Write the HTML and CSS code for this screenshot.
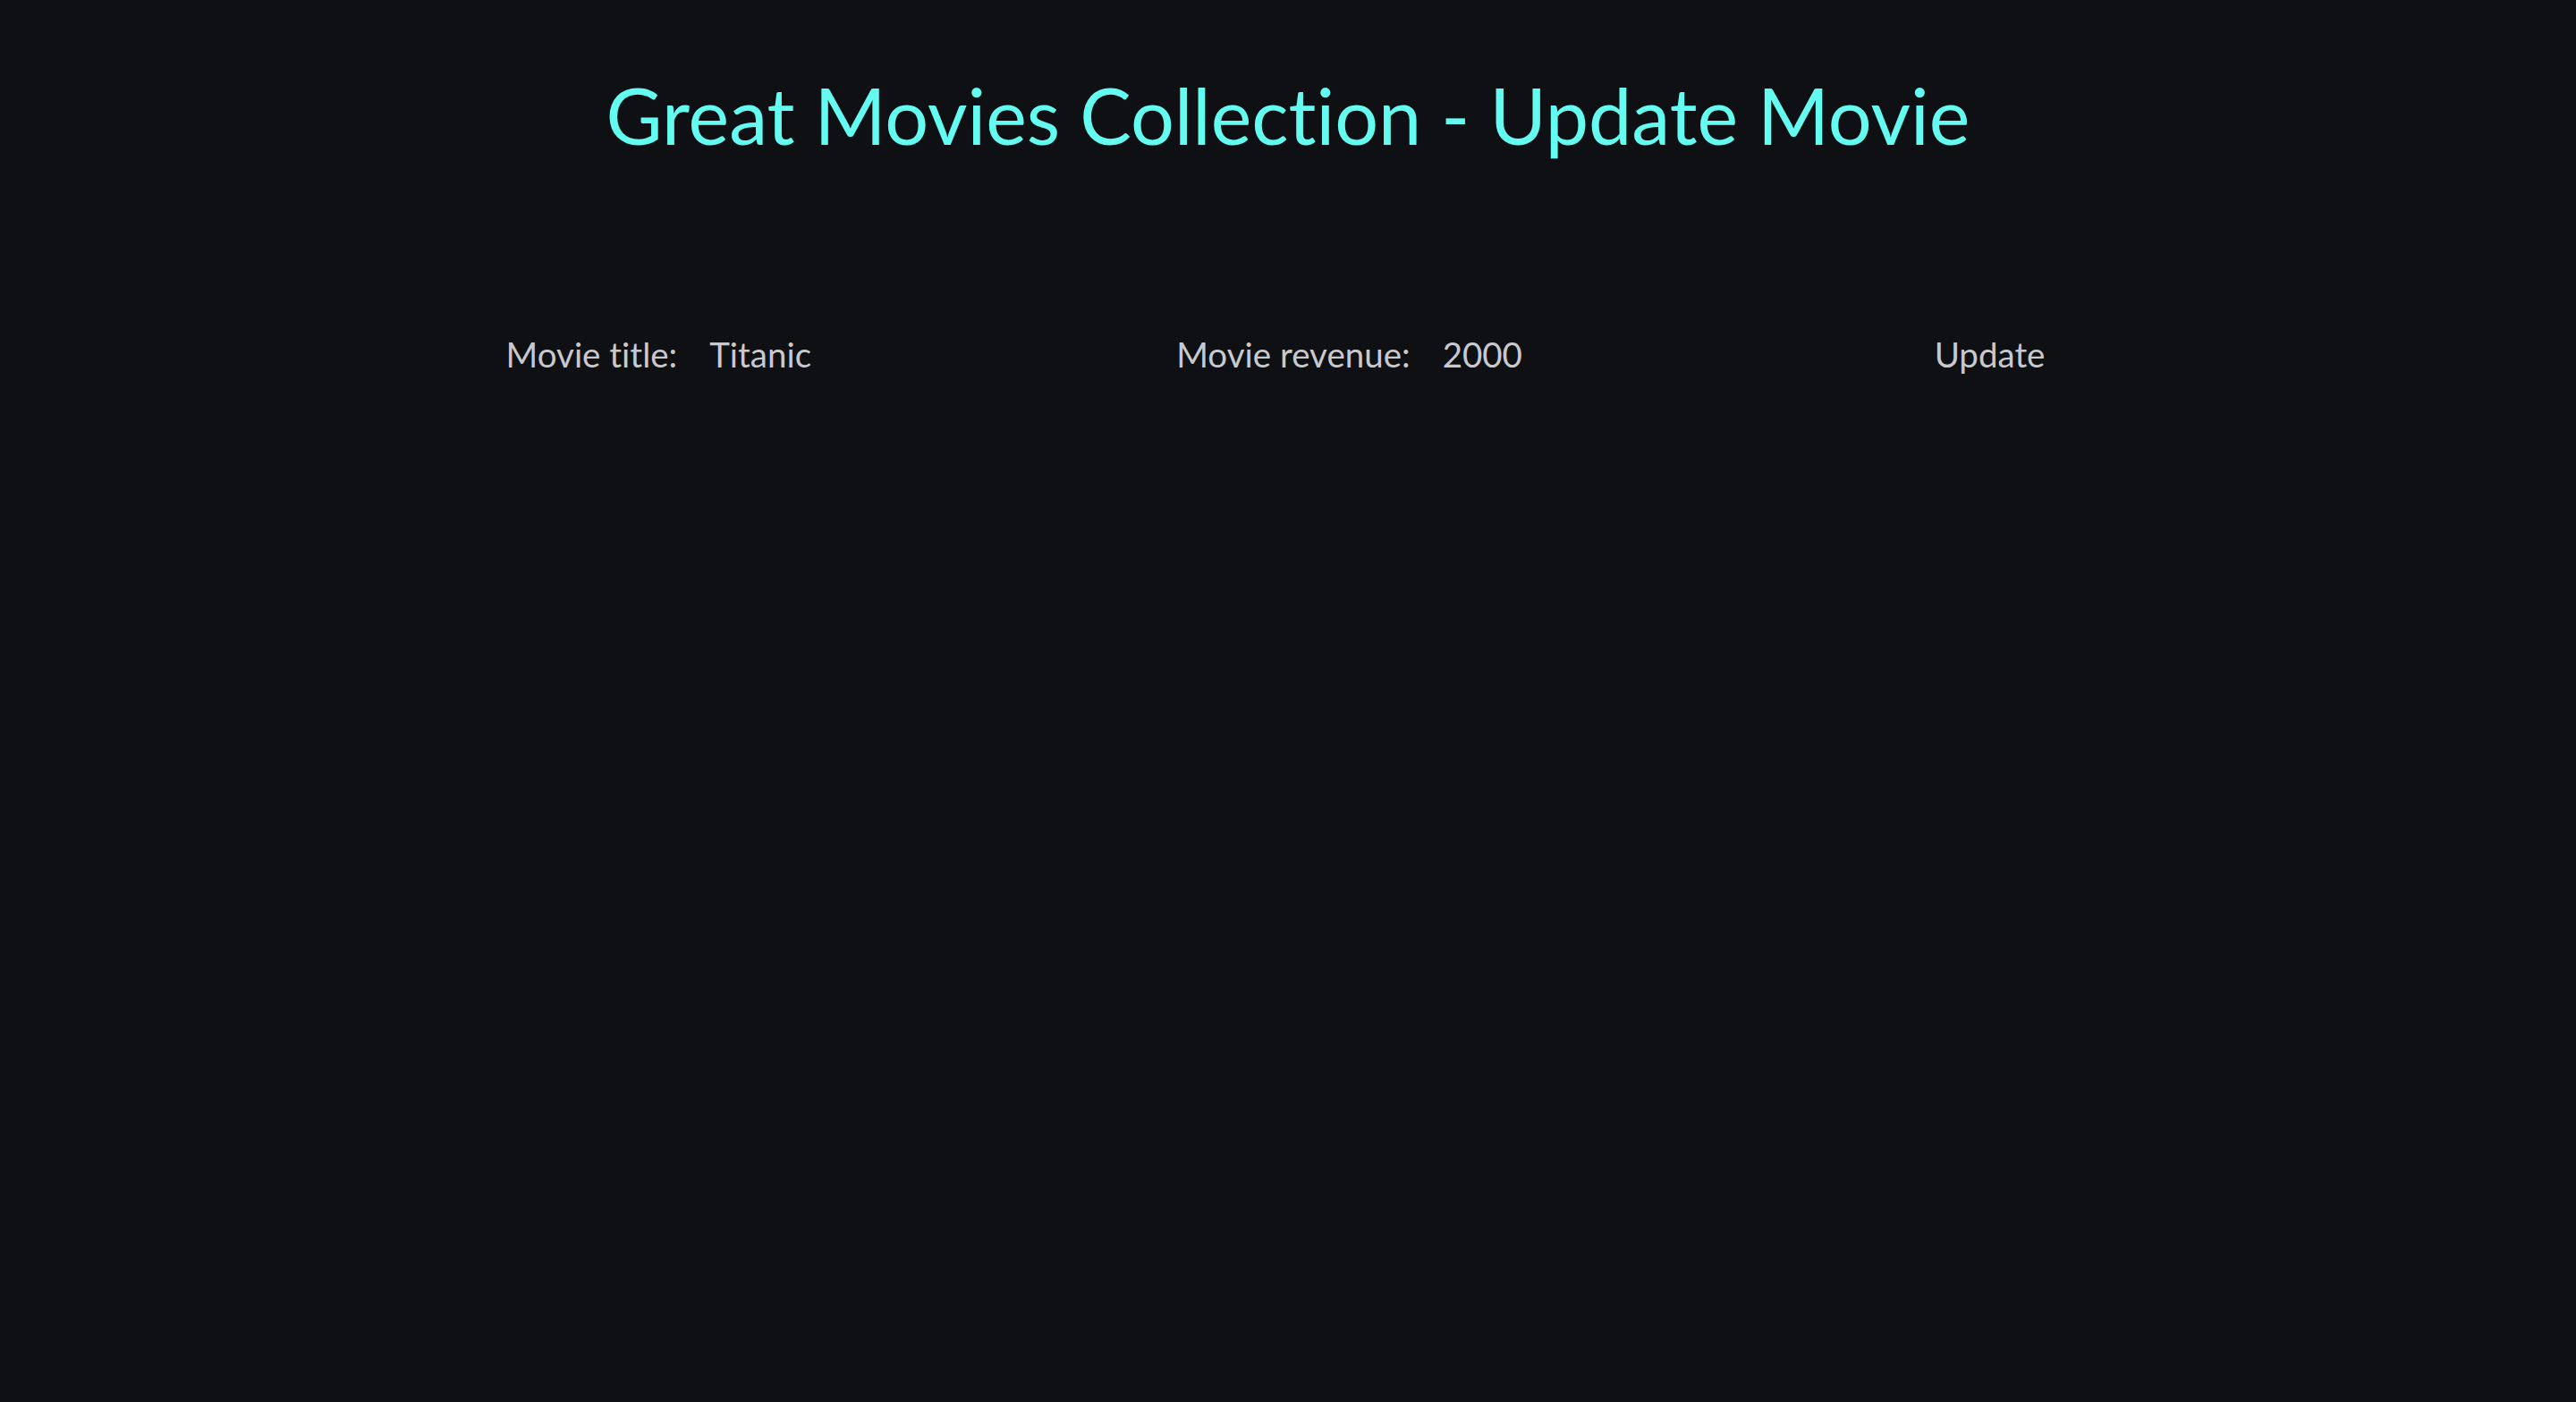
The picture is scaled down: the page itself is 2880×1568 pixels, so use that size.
FILE: index.html
```html
<!DOCTYPE html>
<html lang="en">
<head>
<meta charset="utf-8">
<title>Update Movie</title>
<link rel="stylesheet" href="styles.css">
</head>
<body>
<main class="page">
  <h1 class="title">Great Movies Collection - Update Movie</h1>
  <form class="movie-form">
    <label class="field-label" for="title">Movie title:</label>
    <input class="field-input" id="title" type="text" value="Titanic">
    <label class="field-label" for="revenue">Movie revenue:</label>
    <input class="field-input" id="revenue" type="text" value="2000">
    <button class="update-btn" type="button">Update</button>
  </form>
</main>
</body>
</html>
```

FILE: styles.css
```css
html, body {
  margin: 0;
  padding: 0;
  background: #0e1014;
  min-height: 100%;
}

body {
  font-family: Lato, "Noto Sans", sans-serif;
  font-variant-ligatures: none;
  color: #c8c9cc;
  min-height: 1568px;
}

.page {
  display: flex;
  flex-direction: column;
  align-items: center;
}

.title {
  margin: 0;
  padding-top: 73px;
  font-size: 86.3px;
  font-weight: 400;
  line-height: 112px;
  color: #64fbf0;
}

.movie-form {
  display: flex;
  align-items: center;
  justify-content: center;
  margin-top: 183px;
}

.field-label {
  font-size: 38.5px;
  line-height: 56px;
  margin-right: 36px;
}

.field-input {
  width: 480px;
  margin-right: 42px;
  padding: 0;
  border: none;
  outline: none;
  background: transparent;
  color: #c8c9cc;
  font-family: Lato, "Noto Sans", sans-serif;
  font-variant-ligatures: none;
  font-size: 38.5px;
  line-height: 56px;
  height: 56px;
}

.update-btn {
  padding: 0 28px;
  border: none;
  background: transparent;
  color: #c8c9cc;
  font-family: Lato, "Noto Sans", sans-serif;
  font-size: 38.5px;
  line-height: 56px;
  cursor: pointer;
}
```
